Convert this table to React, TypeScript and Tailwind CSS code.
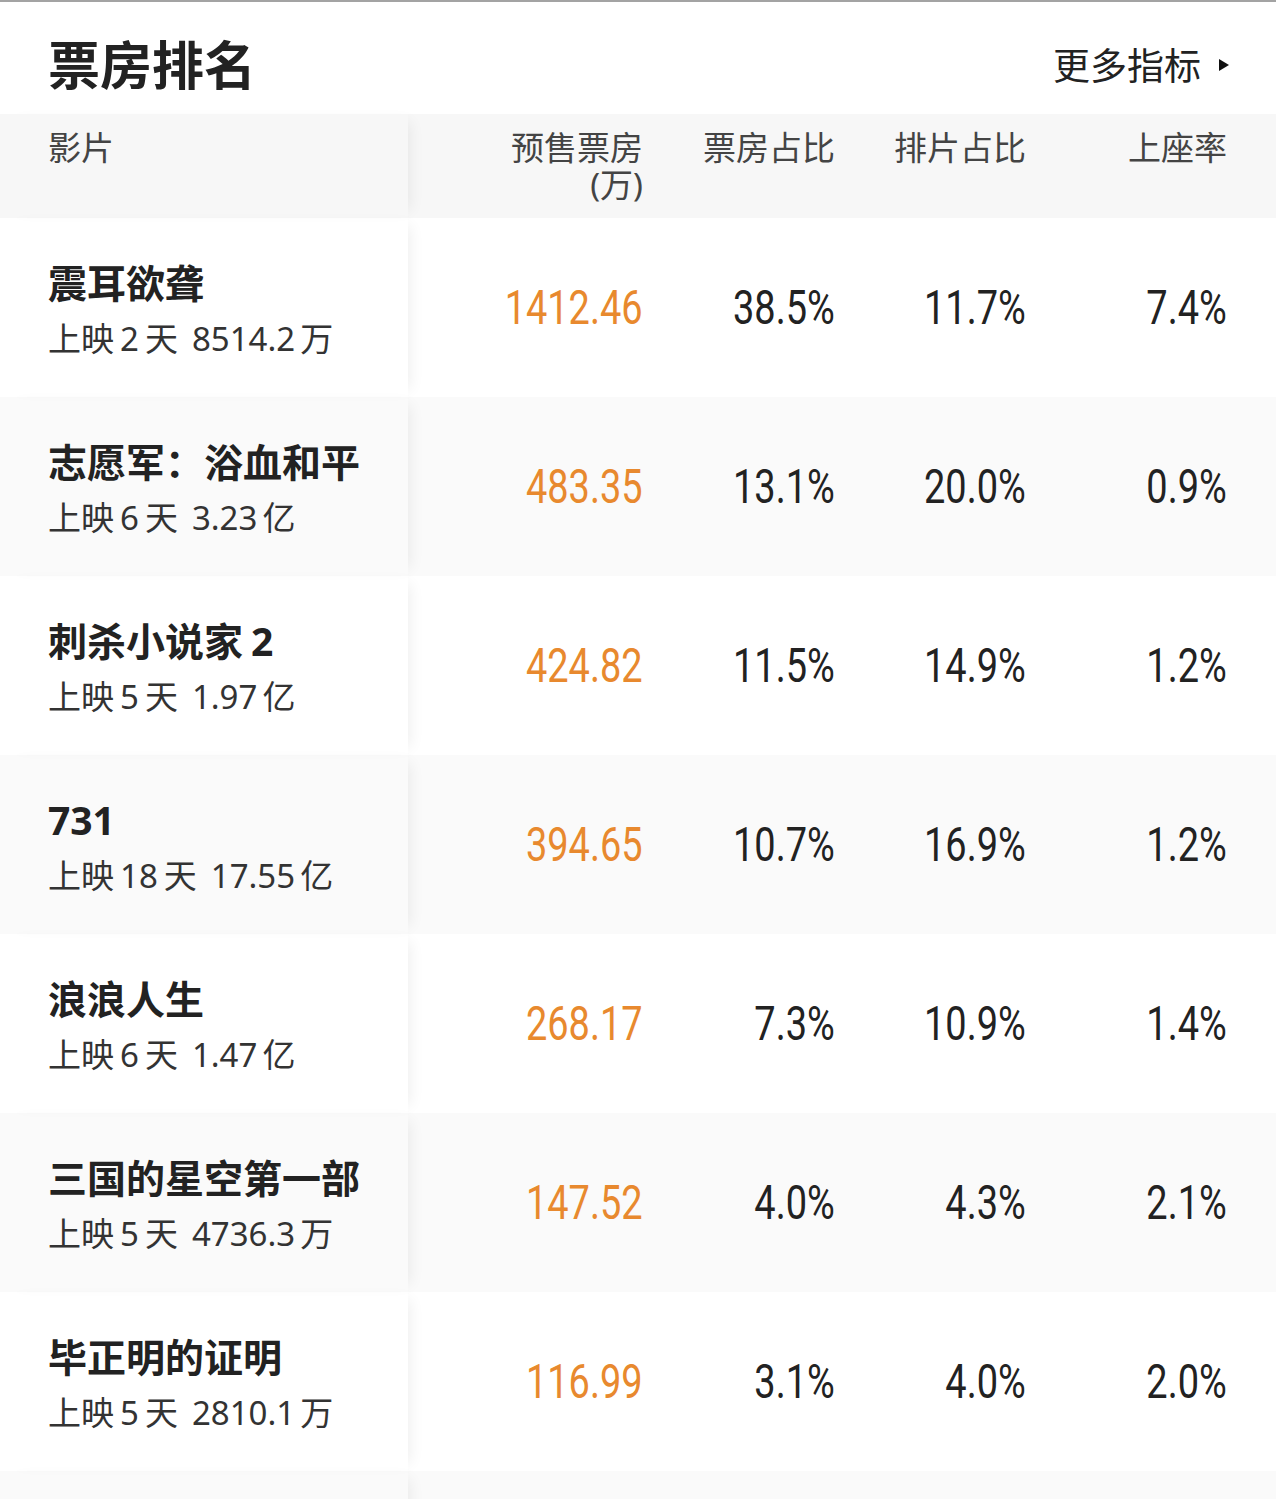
import React from "react";

type Movie = {
  name: string;
  suffix?: string;
  days: string;
  total: string;
  unit: string;
  presale: string;
  boxShare: string;
  showShare: string;
  seatRate: string;
};

const MOVIES: Movie[] = [
  { name: "震耳欲聋", days: "2", total: "8514.2", unit: "万", presale: "1412.46", boxShare: "38.5%", showShare: "11.7%", seatRate: "7.4%" },
  { name: "志愿军：浴血和平", days: "6", total: "3.23", unit: "亿", presale: "483.35", boxShare: "13.1%", showShare: "20.0%", seatRate: "0.9%" },
  { name: "刺杀小说家", suffix: "2", days: "5", total: "1.97", unit: "亿", presale: "424.82", boxShare: "11.5%", showShare: "14.9%", seatRate: "1.2%" },
  { name: "731", days: "18", total: "17.55", unit: "亿", presale: "394.65", boxShare: "10.7%", showShare: "16.9%", seatRate: "1.2%" },
  { name: "浪浪人生", days: "6", total: "1.47", unit: "亿", presale: "268.17", boxShare: "7.3%", showShare: "10.9%", seatRate: "1.4%" },
  { name: "三国的星空第一部", days: "5", total: "4736.3", unit: "万", presale: "147.52", boxShare: "4.0%", showShare: "4.3%", seatRate: "2.1%" },
  { name: "毕正明的证明", days: "5", total: "2810.1", unit: "万", presale: "116.99", boxShare: "3.1%", showShare: "4.0%", seatRate: "2.0%" },
];

const cjk = "font-['Noto_Sans','Noto_Sans_CJK_SC',sans-serif]";

// columna fija izquierda con sombra suave a la derecha
const leftCol = "relative z-10 w-[408px] shrink-0 pl-[48px] shadow-[10px_0_14px_-8px_rgba(0,0,0,0.07)]";

function NumCell({ value, width, orange }: { value: string; width: string; orange?: boolean }) {
  return (
    <div className={`${width} shrink-0 text-right`}>
      {/* números estrechos tipo DIN: Roboto comprimido */}
      <span
        className={`inline-block origin-right scale-x-[0.79] font-['Roboto',sans-serif] text-[48px] leading-none ${
          orange ? "text-[#e8892e]" : "text-[#222]"
        }`}
      >
        {value}
      </span>
    </div>
  );
}

export default function App() {
  return (
    <div className={`w-[1276px] h-[1499px] overflow-hidden bg-white ${cjk}`}>
      {/* ── Título ── */}
      <div className="flex h-[114px] items-center justify-between border-t-2 border-[#a3a3a3] pl-[48px] pr-[47px] pt-[14px]">
        <h1 className="text-[52px] font-bold leading-none text-[#222]">票房排名</h1>
        <div className="flex items-center gap-[18px] text-[37px] leading-none text-[#222]">
          <span>更多指标</span>
          <svg width="10" height="12" viewBox="0 0 10 12">
            <path d="M0 0 L10 6 L0 12 Z" fill="#111" />
          </svg>
        </div>
      </div>

      {/* ── Cabecera de tabla ── */}
      <div className="flex h-[104px] bg-[#f7f7f7] text-[33px] leading-[37px] text-[#444]">
        <div className={`${leftCol} pt-[15px] h-full`}>影片</div>
        <div className="w-[235px] shrink-0 pt-[15px] text-right">
          <div>预售票房</div>
          <div>(万)</div>
        </div>
        <div className="w-[192px] shrink-0 pt-[15px] text-right">票房占比</div>
        <div className="w-[191px] shrink-0 pt-[15px] text-right">排片占比</div>
        <div className="w-[201px] shrink-0 pt-[15px] text-right">上座率</div>
      </div>

      {/* ── Filas ── */}
      {MOVIES.map((m, i) => (
        <div key={m.name} className={`flex h-[179px] items-center ${i % 2 === 1 ? "bg-[#fafafa]" : "bg-white"}`}>
          <div className={`${leftCol} flex h-full flex-col justify-center pt-[6px]`}>
            <div className="text-[39px] font-bold leading-[56px] text-[#222]">
              {m.name}
              {m.suffix && <span className="ml-[8px]">{m.suffix}</span>}
            </div>
            <div className="text-[33px] leading-[56px] text-[#333]">
              上映<span className="mx-[6px]">{m.days}</span>天<span className="ml-[14px]">{m.total}</span>
              <span className="ml-[5px]">{m.unit}</span>
            </div>
          </div>
          <NumCell value={m.presale} width="w-[235px]" orange />
          <NumCell value={m.boxShare} width="w-[192px]" />
          <NumCell value={m.showShare} width="w-[191px]" />
          <NumCell value={m.seatRate} width="w-[201px]" />
        </div>
      ))}
      <div className="flex h-[179px] bg-[#fafafa]">
        <div className={`${leftCol} h-full`} />
      </div>
    </div>
  );
}
